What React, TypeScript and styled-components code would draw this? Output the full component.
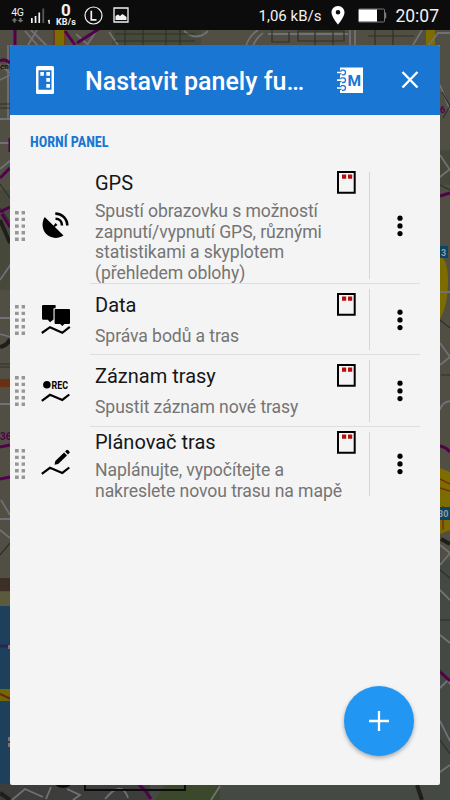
import React from "react";
import styled, { createGlobalStyle } from "styled-components";

const GlobalStyle = createGlobalStyle`
  * { box-sizing: border-box; }
  body { margin: 0; background: #4d4b40; font-family: Roboto, sans-serif; }
`;

const Screen = styled.div`
  position: relative;
  display: flex;
  flex-direction: column;
  width: 450px;
  height: 800px;
  overflow: hidden;
`;

const MapLayer = styled.svg`
  position: absolute;
  inset: 0;
`;

const StatusBar = styled.header`
  position: relative;
  display: flex;
  align-items: center;
  justify-content: space-between;
  height: 30px;
  padding: 0 11px 0 11px;
  background: #0c0c0c;
  color: #f2f2f2;
`;

const StatusGroup = styled.div`
  display: flex;
  align-items: center;
  height: 30px;
`;

const Network = styled.div`
  display: flex;
  flex-direction: column;
  align-items: center;
  width: 13px;
  margin-right: 7px;
  font-size: 10.5px;
  line-height: 11px;
  letter-spacing: -0.4px;
  svg { display: block; }
`;

const Signal = styled.svg`
  margin-right: 4px;
`;

const Speed = styled.div`
  display: flex;
  flex-direction: column;
  align-items: center;
  width: 22px;
  margin-right: 7px;
  padding-top: 1px;
  font-size: 9px;
  font-weight: 700;
  line-height: 9px;
  letter-spacing: 0.2px;
`;

const SpeedValue = styled.span`
  height: 14px;
  font-size: 17px;
  line-height: 13px;
`;

const Rate = styled.span`
  padding-top: 1px;
  font-size: 15px;
  line-height: 30px;
`;

const Clock = styled.span`
  font-size: 17.5px;
  line-height: 30px;
  padding-top: 1px;
`;

const Dialog = styled.main`
  position: relative;
  display: flex;
  flex-direction: column;
  height: 740px;
  margin: 15px 10px;
  border-radius: 2px;
  background: #f4f4f4;
  overflow: hidden;
`;

const Toolbar = styled.div`
  display: flex;
  align-items: center;
  height: 70px;
  padding: 0 21px 0 26px;
  background: #1976d2;
  color: #fff;
`;

const Title = styled.h1`
  flex: 1;
  margin: 0 0 0 31px;
  padding-top: 4px;
  font-size: 25px;
  font-weight: 500;
  line-height: 30px;
  white-space: nowrap;
`;

const IconButton = styled.button`
  display: flex;
  padding: 0;
  border: 0;
  background: none;
`;

const CloseButton = styled(IconButton)`
  margin-left: 38px;
`;

const SectionTitle = styled.h2`
  height: 52px;
  margin: 0;
  padding: 17px 0 0 20px;
  font-family: "Roboto Condensed", Roboto, sans-serif;
  font-size: 15px;
  font-weight: 700;
  line-height: 20px;
  color: #1976d2;
`;

const SectionText = styled.span`
  display: inline-block;
  transform: scaleX(0.945);
  transform-origin: left;
`;

const Row = styled.div<{ $height: number }>`
  display: flex;
  height: ${(p) => p.$height}px;
  padding-left: 5px;
`;

const RowIcons = styled.div`
  display: flex;
  align-items: center;
  width: 75px;
  gap: 16px;
`;

const RowBody = styled.div<{ $line: boolean }>`
  display: flex;
  flex: none;
  width: 330px;
  border-bottom: 1px solid ${(p) => (p.$line ? "#dedede" : "transparent")};
`;

const RowText = styled.div<{ $top: number; $gap: number }>`
  display: flex;
  flex-direction: column;
  width: 247px;
  padding: ${(p) => p.$top}px 0 0 5px;
  gap: ${(p) => p.$gap}px;
`;

const RowTitle = styled.div`
  font-size: 20px;
  line-height: 24px;
  color: #161616;
`;

const Description = styled.div`
  font-size: 17.6px;
  line-height: 20.6px;
  letter-spacing: -0.085px;
  color: #757575;
  white-space: pre;
`;

const Badge = styled.div<{ $top: number }>`
  display: flex;
  width: 32px;
  padding-top: ${(p) => p.$top}px;
`;

const More = styled.div`
  display: flex;
  flex: 1;
  align-items: center;
  justify-content: center;
  margin: 5px 0 4px;
  padding-left: 10px;
  border-left: 1px solid #d6d6d6;
`;

const AddButton = styled.button`
  position: absolute;
  right: 26px;
  bottom: 29px;
  display: flex;
  align-items: center;
  justify-content: center;
  width: 70px;
  height: 70px;
  padding: 0;
  border: 0;
  border-radius: 50%;
  background: #2196f3;
  box-shadow: 0 2px 4px rgba(0, 0, 0, 0.32);
`;

const Handle = () => (
  <svg width="10" height="30" fill="#969696">
    {[0, 6.7, 13.4, 20.1, 26.6].map((y) => (
      <path key={y} d={`M0 ${y}h3.7v3.4H0zM6.6 ${y}h3.7v3.4H6.6z`} />
    ))}
  </svg>
);

const Track = () => (
  <path d="M.8 24.8 9 18.8l12.3 5.1 7-5.4" fill="none" stroke="#000" strokeWidth="2.2" />
);

const icons = {
  gps: (
    <svg width="30" height="30">
      <path d="M3.7 6 22.5 24.6C17 28 9.500 27.800 5 22.800 .8 18 .5 11.400 3.700 6z" />
      <path d="m12.500 14.800 2-2.900 2 2-2.900 2z" />
      <path
        d="M14.500 7.800c3.800 0 6.500 2.700 6.500 6.700M14.300 2.600c6.900 0 12 5.200 12 12"
        fill="none"
        stroke="#000"
        strokeWidth="2.6"
      />
    </svg>
  ),
  data: (
    <svg width="30" height="30">
      <path d="M2.200 0h12.400v3.200H12.500V14.600L9 17.200l-2.200-2.400H2.200Q1 14.800 1 13.600V1.200Q1 0 2.200 0z" />
      <path d="M14.600 4H28q1 0 1 1v13q0 1-1 1h-4.500L21.300 21l-2.200-2h-4.500q-1 0-1-1V5q0-1 1-1z" />
      <path d="M.8 28 9 22.200l12.300 5.600 7.500-6" fill="none" stroke="#000" strokeWidth="2.2" />
    </svg>
  ),
  record: (
    <svg width="30" height="30">
      <circle cx="5.900" cy="8.700" r="3.800" />
      <text
        x="10.500"
        y="12.500"
        textLength="16.500"
        lengthAdjust="spacingAndGlyphs"
        fontFamily="Roboto, sans-serif"
        fontSize="10.500"
        fontWeight="700"
      >
        REC
      </text>
      <Track />
    </svg>
  ),
  plan: (
    <svg width="30" height="30">
      <path d="m13.500 15.800.8-3.800 8.800-8.500 2.900 2.900-8.800 8.500z" />
      <path d="m24.100 2.500 1.500-1.400q.8-.7 1.600.1l1.200 1.200q.8.800 0 1.600L26.900 5.400z" />
      <Track />
    </svg>
  ),
};

type Item = {
  icon: keyof typeof icons;
  title: string;
  text: string;
  height: number;
  top: number;
  gap: number;
  badge: number;
};

const items: Item[] = [
  {
    icon: "gps",
    title: "GPS",
    text: "Spustí obrazovku s možností\nzapnutí/vypnutí GPS, různými\nstatistikami a skyplotem\n(přehledem oblohy)",
    height: 117,
    top: 4,
    gap: 6,
    badge: 4,
  },
  { icon: "data", title: "Data", text: "Správa bodů a tras", height: 71, top: 9, gap: 9, badge: 9 },
  {
    icon: "record",
    title: "Záznam trasy",
    text: "Spustit záznam nové trasy",
    height: 72,
    top: 9,
    gap: 9,
    badge: 9,
  },
  {
    icon: "plan",
    title: "Plánovač tras",
    text: "Naplánujte, vypočítejte a\nnakreslete novou trasu na mapě",
    height: 74,
    top: 3,
    gap: 6,
    badge: 4,
  },
];

const MapDrawing = () => (
  <MapLayer width="450" height="800" fill="none">
    <path fill="#514e43" d="M0 0h450v800H0z" />
    <path fill="#46493a" d="M112 30h89v15h-89zM0 190h12v100H0zM440 150h10v35h-10z" />
    <path fill="#454943" d="M436 560h14v240H150v-15h286z" />
    <path fill="#3b482b" d="M165 785h55v15h-65z" />
    <path fill="#3d3d3b" d="M0 784h150v16H0z" />
    <path fill="#1d405d" d="M0 606h12v178H0z" />
    <path fill="#706900" d="M0 689h12v12H0z" />
    <path fill="#5c5a3c" d="M0 592h12v14H0z" />
    <path fill="#3d2f25" d="M0 578h12v13H0z" />
    <path stroke="#262654" strokeWidth="3" d="M0 646h11" />
    <path stroke="#876f65" strokeWidth="4" d="M8 647h3M8 739h3M8 745h3" />
    <path stroke="#6d201b" strokeWidth="2" d="m0 694 11 5" />
    <path fill="#7d6d00" d="M55 30h11v15H55zM426 30h9v15h-9zM440 256q8 3 8 26t-8 37zM440 468l10 4v58l-10 4z" />
    <path stroke="#792d19" strokeWidth="1.500" d="M54 30v16M65 30v16M440 479l10 5M440 488l10 3M443 506v24" />
    <path
      stroke="#707077"
      strokeWidth="1.800"
      d="M25 31 38 46M31 30 47 46M37 30l-9 15M76 34l12 11M97 30l-10 15 M109 32l9 13M184 31q13 11 24 0M246 46q3-10 12-16M253 46q3-8 10-13M268 34h80M350 30v15M355 30v15M413 45l9-15M428 46l10-13h12M0 65l10 8M0 80l10-5M0 119h12M8 45v75M0 143h10M0 169l11-9M0 280l11-16M0 318h11M0 334l11 3M0 404h11M1 500l9 15M0 519h11M0 530l10 8M440 85l10 25M440 155l10 15M440 177l10-8M440 292h10M440 343l10 14-10 8M440 410q2-8 10-9M440 545l10 8M440 565l10-12M440 590l10 10M440 635l10 8M440 688l8-8 2 4M440 721l10 20M440 772l10-7M12 800l13-11 18 8M46 799l5-12M67 789l13 6-7 5M105 799q17-20 23-1M211 800l9-14"
    />
    <path
      stroke="#2e302b"
      strokeWidth="1.200"
      d="M115 34h80M115 41h80M125 30v15M143 30v15M166 30v15M180 30v15M272 30v12h17V32M298 31h46v10h-46zM315 31v14M333 31v14M368 36h46M375 30v15M393 30v15M442 92l8 14M443 118l7-12M440 185l10 5M440 320l10 8M441 375h9M441 510h9M440 570l10 8M440 620h10M440 670l10 10M440 740l10 14M0 104h10M0 108h10M0 184l10 14M0 208l10 14M0 364h11M0 367h11M0 555l10-12"
    />
    <path
      stroke="#52004d"
      strokeWidth="3"
      d="M15 30v15M65 31l10 14M77 43l28-18M0 61q5-3 10 2M10 138v14M0 178l10-10M0 212l10-5M2 214l8 13M0 447l10-2M0 479l10-2M440 196l10-3M440 446q6 1 10 6M440 672l10 9M139 785l5 4 7 10"
    />
    <path stroke="#1e1f1d" strokeWidth="4" d="m0 220 10 23M0 347q8-2 10-8M0 793l10 7M441 539l9 5M417 785l5 15" />
    <path stroke="#693013" strokeWidth="8" d="M0 383h11" />
    <path fill="#074668" d="M440 246h8v12h-8zM440 507h10v13h-10z" />
    <ellipse cx="63" cy="783" rx="8" ry="5" fill="#0c0c0c" />
    <path stroke="#0c0c0c" strokeWidth="2" d="M85 784v6h100v-6" />
    <g fontFamily="Roboto, sans-serif" fontWeight="700">
      <text x="0" y="69" fontSize="8" fill="#171717">en</text>
      <text x="0" y="440" fontSize="10" fill="#52004d">36</text>
      <text x="440" y="113" fontSize="9" fill="#52004d">6</text>
      <text x="441" y="256" fontSize="9" fill="#949b9e">3</text>
      <text x="438" y="517" fontSize="9" fill="#949b9e">30</text>
    </g>
  </MapLayer>
);

export default function App() {
  return (
    <Screen>
      <GlobalStyle />
      <MapDrawing />
      <StatusBar>
        <StatusGroup>
          <Network>
            4G
            <svg width="13" height="5" fill="#777">
              <path d="m3.500 0 3 2.500H4.500V4.500h-2v-2H.5zM8.500 0h2v2h2L9.500 4.500l-3-2.500h2z" />
            </svg>
          </Network>
          <Signal width="20" height="17" fill="#f2f2f2">
            <path d="M0 11h1.700v5H0zM3.700 9h1.700v7H3.700zM7.400 5.500h1.700V16H7.400z" />
            <path fill="#555" d="M11.300 1.500h1.900V16h-1.900z" />
            <path d="M16.800 13.500l1-.8h1V17h-1z" />
          </Signal>
          <Speed>
            <SpeedValue>0</SpeedValue>
            KB/s
          </Speed>
          <svg width="19" height="19" fill="none" stroke="#f2f2f2">
            <circle cx="9.500" cy="9.500" r="8.500" strokeWidth="1.200" />
            <path d="M7.300 4.800v9h5.200" strokeWidth="1.700" />
          </svg>
          <svg width="26" height="16">
            <path d="M11 1h14v14H11z" fill="none" stroke="#f2f2f2" strokeWidth="1.300" />
            <path d="M12.500 13V9l2.500-1.500 2 1.500 2.500-2 4 3v3z" fill="#f2f2f2" />
          </svg>
        </StatusGroup>
        <StatusGroup>
          <Rate>1,06 kB/s</Rate>
          <svg width="36" height="20" fill="#fff">
            <path
              fillRule="evenodd"
              d="M17 1c4 0 6.500 3 6.500 6.500C23.500 12 17 19.500 17 19.500S10.500 12 10.500 7.500C10.500 4 13 1 17 1zm0 4a2.300 2.300 0 1 0 0 4.600A2.300 2.300 0 0 0 17 5z"
            />
          </svg>
          <svg width="38" height="15">
            <rect x="1.500" y="1" width="26" height="13" rx="1" fill="none" stroke="#777" />
            <path fill="#fff" d="M2 1.500h18v12H2z" />
            <path stroke="#777" strokeWidth="1.500" d="M28.500 4.500v6" />
          </svg>
          <Clock>20:07</Clock>
        </StatusGroup>
      </StatusBar>
      <Dialog>
        <Toolbar>
          <svg width="18" height="28">
            <rect width="18" height="28" rx="1.500" fill="#fff" />
            <path fill="#1976d2" d="M2.500 4.300h13v19.400h-13z" />
            <path fill="#fff" d="M4.300 6h3.600v3.700H4.300zM10.300 6h3.700v3.700h-3.700zM10.300 12h3.700v3.700h-3.700zM10.300 18h3.700v3.700h-3.700z" />
          </svg>
          <Title>Nastavit panely fu…</Title>
          <IconButton aria-label="M">
            <svg width="26" height="27">
              <path fill="#fff" d="M3 .5h23V26H3z" />
              <g fill="none">
                <path stroke="#1976d2" strokeWidth="4" d="M1 5.500h3.500M1 13.200h3.500M1 21h3.500" />
                <path
                  stroke="#1976d2"
                  strokeWidth="1.300"
                  d="M4 3.200h2.200a2.300 2.300 0 0 1 0 4.600H5M4 10.900h2.200a2.300 2.300 0 0 1 0 4.600H5M4 18.700h2.200a2.300 2.300 0 0 1 0 4.600H5"
                />
                <path stroke="#fff" strokeWidth="1.700" d="M0 5.500h5.500M0 13.200h5.500M0 21h5.500" />
              </g>
              <text x="10.500" y="18.500" fill="#1976d2" fontFamily="Roboto, sans-serif" fontWeight="700" fontSize="15.500">
                M
              </text>
            </svg>
          </IconButton>
          <CloseButton aria-label="Zavřít">
            <svg width="18" height="20" stroke="#fff" strokeWidth="2.400">
              <path d="m1.500 2 15 15.500M16.500 2l-15 15.500" />
            </svg>
          </CloseButton>
        </Toolbar>
        <SectionTitle>
          <SectionText>HORNÍ PANEL</SectionText>
        </SectionTitle>
        {items.map((item, index) => (
          <Row key={item.title} $height={item.height}>
            <RowIcons>
              <Handle />
              {icons[item.icon]}
            </RowIcons>
            <RowBody $line={index < items.length - 1}>
              <RowText $top={item.top} $gap={item.gap}>
                <RowTitle>{item.title}</RowTitle>
                <Description>{item.text}</Description>
              </RowText>
              <Badge $top={item.badge}>
                <svg width="19" height="23">
                  <path d="M1 1h16.700v20.700H1z" fill="none" stroke="#000" strokeWidth="2" />
                  <path fill="#b80d0d" d="M5 3.500h4.200v4.200H5zM11 3.500h4.200v4.200H11z" />
                </svg>
              </Badge>
              <More>
                <svg width="6" height="22">
                  <circle cx="3" cy="3.200" r="2.600" />
                  <circle cx="3" cy="10.900" r="2.600" />
                  <circle cx="3" cy="18.600" r="2.600" />
                </svg>
              </More>
            </RowBody>
          </Row>
        ))}
        <AddButton aria-label="Přidat">
          <svg width="20" height="20" stroke="#fff" strokeWidth="2.300">
            <path d="M10 0v20M0 10h20" />
          </svg>
        </AddButton>
      </Dialog>
    </Screen>
  );
}
